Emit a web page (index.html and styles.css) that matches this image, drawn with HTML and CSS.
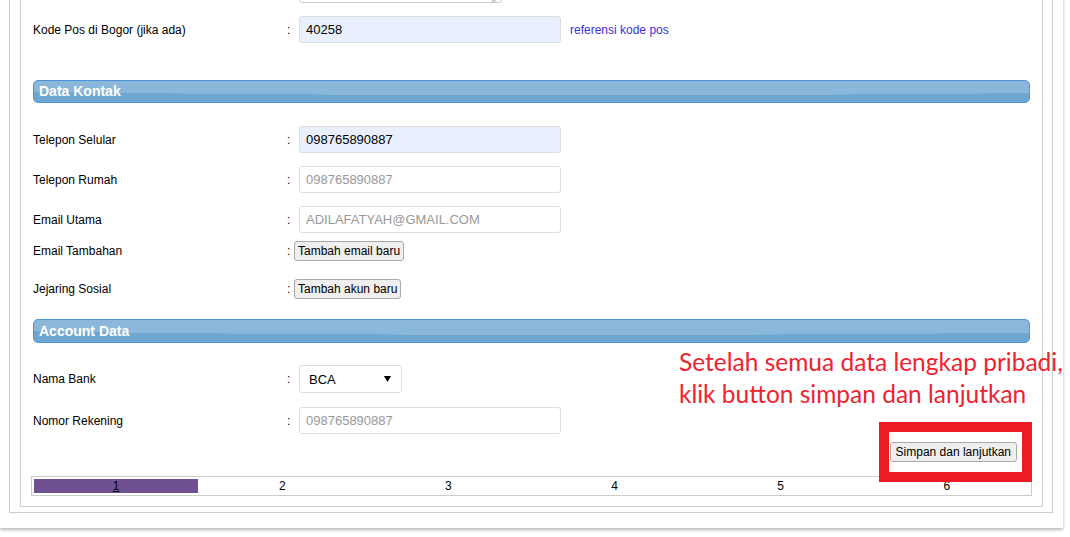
FILE: index.html
```html
<!DOCTYPE html>
<html lang="id">
<head>
<meta charset="utf-8">
<title>Data Pribadi</title>
<link rel="stylesheet" href="styles.css">
</head>
<body>
<div class="page">
  <div class="outer">
    <div class="inner">
      <div class="form">
        <div class="row row-partial">
          <span class="label"></span><span class="colon"></span>
          <div class="field"><div class="stub"><svg class="grip" width="6" height="4" viewBox="0 0 6 4"><path d="M1 4 L4 0 M3 4 L6 0" stroke="#999" stroke-width="1" fill="none"/></svg></div></div>
        </div>
        <div class="row row-input mt-13">
          <span class="label">Kode Pos di Bogor (jika ada)</span><span class="colon">:</span>
          <div class="field"><input class="input autofill" value="40258"><a class="ref-link" href="#">referensi kode pos</a></div>
        </div>

        <h2 class="section-head mt-37">Data Kontak</h2>

        <div class="row row-input mt-23">
          <span class="label">Telepon Selular</span><span class="colon">:</span>
          <div class="field"><input class="input autofill" value="098765890887"></div>
        </div>
        <div class="row row-input mt-13">
          <span class="label">Telepon Rumah</span><span class="colon">:</span>
          <div class="field"><input class="input muted" value="098765890887"></div>
        </div>
        <div class="row row-input mt-13">
          <span class="label">Email Utama</span><span class="colon">:</span>
          <div class="field"><input class="input muted" value="ADILAFATYAH@GMAIL.COM"></div>
        </div>
        <div class="row row-button mt-8">
          <span class="label">Email Tambahan</span><span class="colon">:</span>
          <div class="field"><button class="btn btn-small" type="button">Tambah email baru</button></div>
        </div>
        <div class="row row-button mt-18">
          <span class="label">Jejaring Sosial</span><span class="colon">:</span>
          <div class="field"><button class="btn btn-small" type="button">Tambah akun baru</button></div>
        </div>

        <h2 class="section-head head-tall mt-20">Account Data</h2>

        <div class="row row-select mt-22">
          <span class="label">Nama Bank</span><span class="colon">:</span>
          <div class="field">
            <div class="select">
              <span class="select-value">BCA</span>
              <svg class="select-arrow" width="7" height="6" viewBox="0 0 7 6"><path d="M0 0 H7 L3.5 6 Z" fill="#000"/></svg>
            </div>
          </div>
        </div>
        <div class="row row-input mt-14">
          <span class="label">Nomor Rekening</span><span class="colon">:</span>
          <div class="field"><input class="input muted" value="098765890887"></div>
        </div>

        <div class="actions mt-8">
          <button class="btn btn-submit" type="submit">Simpan dan lanjutkan</button>
        </div>

        <table class="steps mt-14">
          <tr>
            <td class="step active"><a href="#">1</a></td>
            <td class="step">2</td>
            <td class="step">3</td>
            <td class="step">4</td>
            <td class="step">5</td>
            <td class="step">6</td>
          </tr>
        </table>
      </div>
    </div>
  </div>
</div>

<div class="note">Setelah semua data lengkap pribadi,<br>klik button simpan dan lanjutkan</div>
<div class="highlight"></div>
</body>
</html>
```

FILE: styles.css
```css
* { box-sizing: border-box; }

html, body {
  margin: 0;
  padding: 0;
  background: #fff;
}

body {
  width: 1070px;
  height: 537px;
  overflow: hidden;
  position: relative;
  font-family: "Liberation Sans", Arial, sans-serif;
  font-size: 12px;
  color: #000;
}

.page {
  width: 1063px;
  margin-top: -60px;
  padding: 0 10px 15px 9px;
  background: #fff;
  box-shadow: 0 2px 3px rgba(0, 0, 0, 0.28);
}

.outer {
  border: 1px solid #ccc;
  padding: 0 9px 5px 10px;
}

.inner {
  border: 1px solid #ccc;
  padding: 10px;
}

.form {
  display: flex;
  flex-direction: column;
}

.mt-8 { margin-top: 8px; }
.mt-13 { margin-top: 13px; }
.mt-14 { margin-top: 14px; }
.mt-18 { margin-top: 18px; }
.mt-20 { margin-top: 20px; }
.mt-22 { margin-top: 22px; }
.mt-23 { margin-top: 23px; }
.mt-37 { margin-top: 37px; }

.row {
  display: grid;
  grid-template-columns: 252px 9px 1fr;
  align-items: center;
  margin-left: 2px;
  margin-right: 2px;
}

.row-partial { margin-top: 24px; height: 27px; }
.row-input { height: 27px; }
.row-button { height: 20px; }
.row-select { height: 28px; }

.label {
  font-size: 12px;
  line-height: 14px;
}

.colon {
  padding-left: 2px;
  font-size: 12px;
  line-height: 14px;
}

.field {
  display: flex;
  align-items: center;
  height: 100%;
}

.stub {
  margin-left: 5px;
  width: 203px;
  height: 27px;
  border: 1px solid #ccc;
  border-radius: 3px;
  display: flex;
  justify-content: flex-end;
  align-items: flex-end;
  padding: 0 4px 0 0;
}

.input {
  margin: 0 0 0 5px;
  width: 262px;
  height: 27px;
  border: 1px solid #ddd;
  border-radius: 3px;
  padding: 0 6px;
  font-family: "Liberation Sans", Arial, sans-serif;
  font-size: 13px;
  color: #000;
  background: #fff;
  outline: none;
}

.input.autofill {
  background: #e8f0fe;
  color: #000;
}

.input.muted {
  color: #999;
}

.ref-link {
  margin-left: 9px;
  color: #3d2fd8;
  text-decoration: none;
  font-size: 12px;
}

.section-head {
  margin-left: 2px;
  margin-right: 2px;
  margin-bottom: 0;
  height: 23px;
  padding-left: 5px;
  border: 1px solid #4b93d6;
  border-radius: 5px;
  font-size: 14px;
  font-weight: bold;
  line-height: 21px;
  color: #fff;
  background:
    radial-gradient(ellipse 85% 68% at 55% 0%, #8ab7da 99%, rgba(138, 183, 218, 0) 100%),
    linear-gradient(to bottom, #8ab7da 0%, #8ab7da 49%, #70a7d0 51%, #6da5cf 100%);
}

.section-head.head-tall {
  height: 24px;
  line-height: 22px;
}

.btn {
  font-family: "Liberation Sans", Arial, sans-serif;
  font-size: 12px;
  color: #000;
  height: 20px;
  line-height: 16px;
  background: #efefef;
  border: 1px solid #a9a9a9;
  border-radius: 3px;
}

.btn-small { padding: 0 3px; }
.btn-submit { padding: 0 5px; margin-right: 15px; }

.select {
  margin-left: 5px;
  width: 103px;
  height: 28px;
  border: 1px solid #ddd;
  border-radius: 3px;
  padding: 0 10px 0 9px;
  display: flex;
  align-items: center;
  justify-content: space-between;
  background: #fff;
}

.select-value {
  font-size: 13px;
}

.actions {
  display: flex;
  justify-content: flex-end;
  height: 20px;
}

.steps {
  width: 100%;
  border: 1px solid #ccc;
  border-spacing: 2px;
  table-layout: fixed;
}

.step {
  height: 14px;
  padding: 0;
  text-align: center;
  font-size: 12px;
  line-height: 14px;
  color: #000;
}

.step.active {
  background: #6f5191;
}

.step a {
  color: #000;
  text-decoration: underline;
}

.note {
  position: absolute;
  left: 679px;
  top: 346px;
  font-family: Lato, "Open Sans", sans-serif;
  font-size: 24.5px;
  line-height: 32px;
  color: #ed2330;
  white-space: nowrap;
}

.highlight {
  position: absolute;
  left: 879px;
  top: 422px;
  width: 153px;
  height: 60px;
  border: 10px solid #ed1c24;
}
```
